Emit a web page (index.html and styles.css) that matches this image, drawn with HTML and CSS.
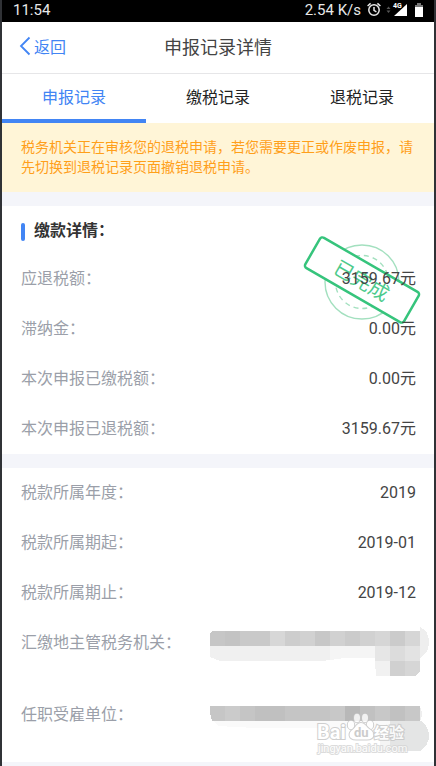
FILE: index.html
```
<!DOCTYPE html>
<html lang="zh-CN">
<head>
    <meta charset="UTF-8">
    <meta name="viewport" content="width=device-width, initial-scale=1.0">
    <title>申报记录详情</title>
    <link rel="stylesheet" href="styles.css">
</head>
<body>

    <div class="phone">
        <!-- 状态栏 -->
        <div class="status-bar">
            <span>11:54</span>
            <div class="status-right">
                <span>2.54 K/s</span>
                <svg class="status-icons" width="60" height="18" viewBox="0 0 60 18">
                    <g fill="none" stroke="#e8e8e8" stroke-width="1.5">
                        <circle cx="8" cy="9" r="5.2"/>
                        <path d="M8 6v3.4l2.4 1.4M1.6 5l3-2.6M14.4 5l-3-2.6"/>
                    </g>
                    <path d="M20.500 8l2-2.500 2 2.500zM20.500 9.500l2 2.500 2-2.500z" fill="#555"/>
                    <path d="M41 3v12H28z" fill="#fff"/>
                    <text x="27" y="7" class="net-type">4G</text>
                    <path d="M51 2h4v2h2v12h-8V4h2z" fill="#777"/>
                    <path d="M49 6h8v10h-8z" fill="#fff"/>
                </svg>
            </div>
        </div>

        <!-- 标题栏 -->
        <header class="header">
            <button type="button" class="back-btn">
                <svg width="12" height="20" viewBox="0 0 12 20">
                    <path d="M10.500 1.500L2 10l8.500 8.500" fill="none" stroke="#4285f4" stroke-width="1.8"/>
                </svg>
                返回
            </button>
            <h1>申报记录详情</h1>
        </header>

        <nav class="tabs">
            <button type="button" class="tab active">申报记录</button>
            <button type="button" class="tab">缴税记录</button>
            <button type="button" class="tab">退税记录</button>
        </nav>

        <p class="notice">税务机关正在审核您的退税申请，若您需要更正或作废申报，请先切换到退税记录页面撤销退税申请。</p>

        <!-- 缴款详情 -->
        <section class="card">
            <h2>缴款详情：</h2>
            <svg class="stamp" width="120" height="92" viewBox="0 0 120 92">
                <g fill="none" stroke="#a3e0bf" stroke-width="1.4">
                    <circle cx="60" cy="48" r="37"/>
                    <circle cx="60" cy="48" r="26.500" stroke-dasharray="5 4"/>
                </g>
                <g transform="rotate(30 60 46)">
                    <rect x="3" y="28.500" width="114" height="35" rx="3" fill="#fff" stroke="#36c47c" stroke-width="2.500"/>
                    <text x="60" y="54" text-anchor="middle" class="stamp-text">已完成</text>
                </g>
            </svg>
            <dl>
                <div class="row"><dt>应退税额：</dt><dd>3159.67元</dd></div>
                <div class="row"><dt>滞纳金：</dt><dd>0.00元</dd></div>
                <div class="row"><dt>本次申报已缴税额：</dt><dd>0.00元</dd></div>
                <div class="row"><dt>本次申报已退税额：</dt><dd>3159.67元</dd></div>
            </dl>
        </section>

        <!-- 税款所属信息 -->
        <section class="card">
            <dl>
                <div class="row"><dt>税款所属年度：</dt><dd>2019</dd></div>
                <div class="row"><dt>税款所属期起：</dt><dd>2019-01</dd></div>
                <div class="row"><dt>税款所属期止：</dt><dd>2019-12</dd></div>
                <div class="row tall">
                    <dt>汇缴地主管税务机关：</dt>
                    <dd class="masked">
                        <svg width="219" height="72" viewBox="0 0 219 72" shape-rendering="crispEdges">
                            <path d="M210 9q9 4 9 15t-9 16z" fill="#eee"/>
                            <path d="M2 13h13v15H0V15z" fill="#c6c6c6"/>
                            <path d="M15 13h15v15H15z" fill="#c3c3c3"/>
                            <path d="M30 13h30v15H30z" fill="#c9c9c9"/>
                            <path d="M60 13h15v15H60z" fill="#d7d7d7"/>
                            <path d="M75 13h15v15H75z" fill="#cdcdcd"/>
                            <path d="M90 13h15v15H90z" fill="#d1d1d1"/>
                            <path d="M105 13h15v15h-15z" fill="#c7c7c7"/>
                            <path d="M120 13h15v15h-15zM150 13h15v15h-15z" fill="#d1d1d1"/>
                            <path d="M135 13h15v15h-15zM180 13h15v15h-15z" fill="#cbcbcb"/>
                            <path d="M165 13h15v15h-15zM195 13h15v15h-15z" fill="#d6d6d6"/>
                            <path d="M0 28h120v14l-8 1H10L0 39z" fill="#f0f0f0"/>
                            <path d="M120 28h45v12h-30l-15 2z" fill="#f5f5f5"/>
                            <path d="M165 28h15v15h-15z" fill="#e6e6e6"/>
                            <path d="M180 28h15v15h-15z" fill="#dcdcdc"/>
                            <path d="M195 28h15v15h-15z" fill="#e3e3e3"/>
                            <path d="M165 43h15v15h-14z" fill="#f1f1f1"/>
                            <path d="M180 43h15v15h-15z" fill="#d0d0d0"/>
                            <path d="M195 43h15v10l-5 5h-10z" fill="#d6d6d6"/>
                        </svg>
                    </dd>
                </div>
                <div class="row tall">
                    <dt>任职受雇单位：</dt>
                    <dd class="masked">
                        <svg width="219" height="72" viewBox="0 0 219 72" shape-rendering="crispEdges">
                            <path d="M0 16h15v15H2l-2-8z" fill="#c6c6c6"/>
                            <path d="M15 16h15v15H15z" fill="#cbcbcb"/>
                            <path d="M30 16h15v15H30z" fill="#c5c5c5"/>
                            <path d="M45 16h30v15H45z" fill="#c0c0c0"/>
                            <path d="M75 16h45v15H75z" fill="#c5c5c5"/>
                            <path d="M120 16h15v15h-15zM165 16h15v15h-15z" fill="#c8c8c8"/>
                            <path d="M135 16h15v15h-15z" fill="#b8b8b8"/>
                            <path d="M150 16h15v15h-15zM180 16h15v15h-15z" fill="#c1c1c1"/>
                            <path d="M195 16h15v15h-15z" fill="#c8c8c8"/>
                            <path d="M210 17q4 7 0 14z" fill="#eee"/>
                            <path d="M3 31h177v7H45L8 36z" fill="#fafafa"/>
                            <path d="M170 46h10v15h-10z" fill="#f5f5f5"/>
                            <path d="M180 31h32q7 6 7 15t-9 15h-30z" fill="#e4e5e5"/>
                        </svg>
                    </dd>
                </div>
            </dl>

            <!-- 水印 -->
            <svg class="watermark" width="94" height="50" viewBox="0 0 94 50">
                <g fill="#fff" stroke="#c4c4c4" stroke-width="2" paint-order="stroke">
                    <text x="1" y="28" class="wm-name">Bai</text>
                    <ellipse cx="35" cy="14" rx="3.200" ry="4.200"/>
                    <ellipse cx="41" cy="7" rx="3" ry="4.200"/>
                    <ellipse cx="49" cy="7" rx="3" ry="4.200"/>
                    <ellipse cx="54" cy="14" rx="3.200" ry="4.200"/>
                    <path d="M45 12c-4 0-5 4-8 6.500-5 3-5 10 3 10h11c8 0 8-7 3-10-4-2.500-5-6.500-9-6.500z"/>
                    <text x="58" y="27" class="wm-cn">经验</text>
                    <text x="2" y="41" class="wm-url">jingyan.baidu.com</text>
                </g>
                <text x="38" y="26" class="wm-du">du</text>
            </svg>
        </section>
    </div>

</body>
</html>
```
FILE: styles.css
```
* {
    box-sizing: border-box;
}

body {
    margin: 0;
    padding: 0 2px;
    min-height: 100vh;
    display: flex;
    background-color: #303236;
    font-family: Roboto, "Noto Sans CJK SC", sans-serif;
    font-size: 16px;
    color: #444;
}

h1, h2, p, dl, dd {
    margin: 0;
}

button {
    border: none;
    background: none;
    padding: 0;
    font-family: inherit;
    font-size: 16px;
    cursor: pointer;
}

.phone {
    flex: 1;
    background-color: #f4f5fa;
}

/* --- 状态栏 --- */
.status-bar {
    display: flex;
    justify-content: space-between;
    align-items: center;
    height: 22px;
    padding: 0 8px 2px 11px;
    background-color: #000;
    color: #e8e8e8;
    font-size: 15px;
}

.status-right {
    display: flex;
    align-items: center;
    gap: 5px;
}

.net-type {
    font-size: 7px;
    font-weight: 700;
    fill: #fff;
    stroke: #000;
    stroke-width: 2px;
    paint-order: stroke;
}

/* --- 标题栏 --- */
.header {
    display: grid;
    grid-template-columns: 1fr auto 1fr;
    align-items: center;
    height: 52px;
    padding: 0 17px 4px;
    background-color: #fff;
    border-bottom: 1px solid #e6e6e8;
}

.back-btn {
    display: flex;
    align-items: center;
    gap: 3px;
    color: #4285f4;
}

h1 {
    font-size: 18px;
    font-weight: 400;
    color: #444;
}

/* --- 标签页 --- */
.tabs {
    display: flex;
    height: 49px;
    background-color: #fff;
}

.tab {
    flex: 1;
    padding-bottom: 2px;
    border-bottom: 4px solid transparent;
    color: #222;
}

.tab.active {
    color: #4285f4;
    border-bottom-color: #4285f4;
}

.notice {
    padding: 14px 19px 15px;
    background-color: #fff5d7;
    color: #ff9f1a;
    font-size: 14px;
    line-height: 20px;
}

/* --- 明细卡片 --- */
.card {
    position: relative;
    margin-top: 14px;
    background-color: #fff;
}

h2 {
    display: flex;
    align-items: center;
    gap: 9px;
    height: 48px;
    padding: 0 19px 2px;
    font-size: 16px;
    color: #333;
}

h2::before {
    content: "";
    width: 4px;
    height: 18px;
    margin-top: 6px;
    border-radius: 2px;
    background-color: #4285f4;
}

.row {
    display: flex;
    justify-content: space-between;
    padding: 0 18px 0 19px;
    line-height: 50px;
}

.row.tall {
    height: 72px;
}

dt {
    color: #9b9fa9;
}

dd {
    position: relative;
    z-index: 1;
}

/* 打码内容 */
.masked {
    display: flex;
    margin-right: -13px;
}

/* 已完成印章 */
.stamp {
    position: absolute;
    top: 28px;
    right: 12px;
    overflow: visible;
}

.stamp-text {
    font-size: 20px;
    fill: #4cca8b;
}

/* --- 水印 --- */
.watermark {
    position: absolute;
    right: 24px;
    bottom: 1px;
    z-index: 2;
    opacity: 0.8;
}

.wm-name {
    font-size: 20px;
    font-weight: 700;
}

.wm-du {
    font-size: 13px;
    font-weight: 700;
    fill: #c0c0c0;
}

.wm-cn {
    font-size: 15px;
    font-weight: 700;
}

.wm-url {
    font-size: 11px;
    stroke: #d4d4d4;
}
```
